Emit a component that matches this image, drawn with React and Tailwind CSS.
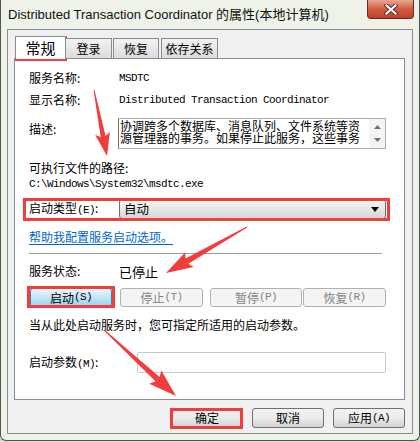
import React from "react";

function M({ children }) {
  return (
    <span className="font-['Liberation_Mono',monospace] text-[11px] tracking-[-0.6px]">
      {children}
    </span>
  );
}

function arrowPoints(x1, y1, x2, y2, tw, sw, hl, hw) {
  const dx = x2 - x1;
  const dy = y2 - y1;
  const len = Math.hypot(dx, dy);
  const ux = dx / len;
  const uy = dy / len;
  const nx = -uy;
  const ny = ux;
  const bx = x2 - ux * hl;
  const by = y2 - uy * hl;
  const bbx = bx - ux * 3;
  const bby = by - uy * 3;
  const p = [
    [x1 + (nx * tw) / 2, y1 + (ny * tw) / 2],
    [bx + (nx * sw) / 2, by + (ny * sw) / 2],
    [bbx + (nx * hw) / 2, bby + (ny * hw) / 2],
    [x2, y2],
    [bbx - (nx * hw) / 2, bby - (ny * hw) / 2],
    [bx - (nx * sw) / 2, by - (ny * sw) / 2],
    [x1 - (nx * tw) / 2, y1 - (ny * tw) / 2],
  ];
  return p.map((q) => q[0].toFixed(1) + "," + q[1].toFixed(1)).join(" ");
}

function DisabledBtn({ w, ml, children }) {
  return (
    <div
      className={`${w} ${ml} h-[19px] rounded-[3px] border border-[#adb2b5] bg-[#f4f4f4] text-[#838383] flex items-center justify-center`}
    >
      {children}
    </div>
  );
}

function DlgBtn({ children }) {
  return (
    <div className="w-[72px] h-[20px] rounded-[3px] border border-[#707070] bg-linear-to-b from-[#f2f2f2] via-[#ebebeb] to-[#d2d2d2] flex items-center justify-center">
      {children}
    </div>
  );
}

export default function App() {
  return (
    <div className="w-[420px] h-[442px] relative overflow-hidden bg-[#d3dccb] font-['Noto_Sans_CJK_SC','Liberation_Sans',sans-serif] text-[12px] leading-none text-black">
      <div className="w-[420px] h-[441px] bg-[#eef2e8] border-x border-b border-[#4d5650] rounded-b-[6px] flex flex-col">
        {/* Title bar */}
        <div className="h-[29px] shrink-0 flex items-start">
          <div className="pl-[7px] pt-[8px] text-[13px] leading-[14px] font-['Liberation_Sans','Noto_Sans_CJK_SC',sans-serif] text-[#111]">
            Distributed Transaction Coordinator 的属性(本地计算机)
          </div>
          <div className="ml-auto mr-[5px] w-[47px] h-[19px] rounded-b-[4px] border border-t-0 border-[#6b2a22] bg-linear-to-b from-[#e9a794] via-[#d25a42] to-[#c23f2b] flex items-center justify-center">
            <svg width="14" height="11" viewBox="0 0 14 11">
              <path d="M2.5 1.5 L11.5 9.5 M11.5 1.5 L2.5 9.5" stroke="#5a2a22" strokeWidth="4" strokeLinecap="square" />
              <path d="M2.5 1.5 L11.5 9.5 M11.5 1.5 L2.5 9.5" stroke="#ffffff" strokeWidth="2.2" strokeLinecap="square" />
            </svg>
          </div>
        </div>

        {/* Client area */}
        <div className="mx-[6px] h-[405px] border border-[#888d92] bg-[#f0f0f0] flex flex-col">
          {/* Tabs */}
          <div className="mt-[6px] ml-[7px] h-[22px] flex items-end relative z-10">
            <div className="w-[51px] h-[23px] mb-[-1px] border-t border-x border-[#898c95] bg-white flex items-center justify-center text-[15px] pb-[2px]">
              常规
            </div>
            <div className="w-[46px] h-[20px] border-t border-r border-[#898c95] bg-linear-to-b from-[#f2f2f2] to-[#dcdcdc] flex items-center justify-center">
              登录
            </div>
            <div className="ml-[1px] w-[46px] h-[20px] border-t border-x border-[#898c95] bg-linear-to-b from-[#f2f2f2] to-[#dcdcdc] flex items-center justify-center">
              恢复
            </div>
            <div className="ml-[2px] w-[57px] h-[20px] border-t border-x border-[#898c95] bg-linear-to-b from-[#f2f2f2] to-[#dcdcdc] flex items-center justify-center">
              依存关系
            </div>
          </div>

          {/* Panel */}
          <div className="ml-[6px] w-[391px] h-[342px] border border-[#898c95] bg-white flex flex-col pl-[14px]">
            <div className="mt-[8px] h-[22px] flex items-center">
              <div className="w-[90px]">服务名称:</div>
              <M>MSDTC</M>
            </div>
            <div className="h-[22px] flex items-center">
              <div className="w-[90px]">显示名称:</div>
              <M>Distributed Transaction Coordinator</M>
            </div>
            <div className="mt-[7px] h-[31px] flex">
              <div className="w-[89px] pt-[5px]">描述:</div>
              <div className="w-[268px] h-[31px] border border-[#abadb3] border-l-[#707070] flex">
                <div className="flex-1 pl-[1px] pt-[1px] leading-[12px] overflow-hidden text-[12px]">
                  <div>协调跨多个数据库、消息队列、文件系统等资</div>
                  <div>源管理器的事务。如果停止此服务，这些事务</div>
                </div>
                <div className="w-[16px] bg-[#f4f4f4] flex flex-col items-center justify-between py-[6px]">
                  <svg width="7" height="4" viewBox="0 0 7 4">
                    <path d="M0 4 L3.5 0 L7 4 Z" fill="#6f6f6f" />
                  </svg>
                  <svg width="7" height="4" viewBox="0 0 7 4">
                    <path d="M0 0 L3.5 4 L7 0 Z" fill="#6f6f6f" />
                  </svg>
                </div>
              </div>
            </div>
            <div className="mt-[11px] h-[16px] flex items-center">可执行文件的路径:</div>
            <div className="h-[16px] flex items-center">
              <M>C:\Windows\System32\msdtc.exe</M>
            </div>
            <div className="mt-[7px] h-[20px] flex items-center">
              <div className="w-[90px]">
                启动类型<M>(E)</M>:
              </div>
              <div className="w-[267px] h-[20px] rounded-[3px] border border-[#707070] bg-linear-to-b from-[#f4f4f4] via-[#e8e8e8] to-[#d6d6d6] flex items-center pl-[4px] pr-[6px]">
                <span className="text-[12.5px]">自动</span>
                <svg className="ml-auto" width="8" height="5" viewBox="0 0 8 5">
                  <path d="M0 0 L8 0 L4 5 Z" fill="#000" />
                </svg>
              </div>
            </div>
            <div className="mt-[10px] h-[16px] flex items-center">
              <span className="text-[#0066cc] underline underline-offset-[2px]">帮助我配置服务启动选项。</span>
            </div>
            <div className="mt-[8px] w-[353px] h-px bg-[#a0a0a0]" />
            <div className="mt-[9px] h-[16px] flex items-center">
              <div className="w-[90px]">服务状态:</div>
              <span className="text-[13px]">已停止</span>
            </div>
            <div className="mt-[9px] h-[19px] flex">
              <div className="ml-[1px] w-[82px] h-[19px] rounded-[3px] border border-[#3c7fb1] bg-linear-to-b from-[#eaf6fd] via-[#c4e5f6] to-[#98d1ef] flex items-center justify-center">
                启动<M>(S)</M>
              </div>
              <DisabledBtn w="w-[83px]" ml="ml-[8px]">
                停止<M>(T)</M>
              </DisabledBtn>
              <DisabledBtn w="w-[92px]" ml="ml-[7px]">
                暂停<M>(P)</M>
              </DisabledBtn>
              <DisabledBtn w="w-[83px]" ml="ml-[1px]">
                恢复<M>(R)</M>
              </DisabledBtn>
            </div>
            <div className="mt-[10px] h-[16px] flex items-center">
              当从此处启动服务时，您可指定所适用的启动参数。
            </div>
            <div className="mt-[19px] h-[21px] flex items-center">
              <div className="w-[108px]">
                启动参数<M>(M)</M>:
              </div>
              <div className="w-[249px] h-[21px] rounded-[2px] border border-[#c5c8cf] bg-white" />
            </div>
          </div>

          {/* Dialog buttons */}
          <div className="mt-[8px] mr-[7px] flex justify-end gap-[9px]">
            <DlgBtn>确定</DlgBtn>
            <DlgBtn>取消</DlgBtn>
            <DlgBtn>
              应用<M>(A)</M>
            </DlgBtn>
          </div>
        </div>
      </div>

      {/* Red annotation boxes */}
      <div className="absolute left-[15px] top-[36px] w-[52px] h-[25px] border-[3px] border-[#f23d3d]" />
      <div className="absolute left-[23px] top-[198px] w-[367px] h-[23px] border-[3px] border-[#f23d3d]" />
      <div className="absolute left-[27px] top-[286px] w-[88px] h-[22px] border-[3px] border-[#f23d3d]" />
      <div className="absolute left-[170px] top-[408px] w-[73px] h-[21px] border-[3px] border-[#f23d3d]" />

      {/* Red annotation arrows */}
      <svg className="absolute left-0 top-0 pointer-events-none" width="420" height="442" viewBox="0 0 420 442">
        <polygon points={arrowPoints(94, 90, 107, 156, 1, 5, 20, 15)} fill="#f23d3d" />
        <polygon points={arrowPoints(247, 227, 166, 273, 1, 6, 24, 17)} fill="#f23d3d" />
        <polygon points={arrowPoints(104, 330, 176, 396, 1, 6, 25, 18)} fill="#f23d3d" />
      </svg>
    </div>
  );
}
